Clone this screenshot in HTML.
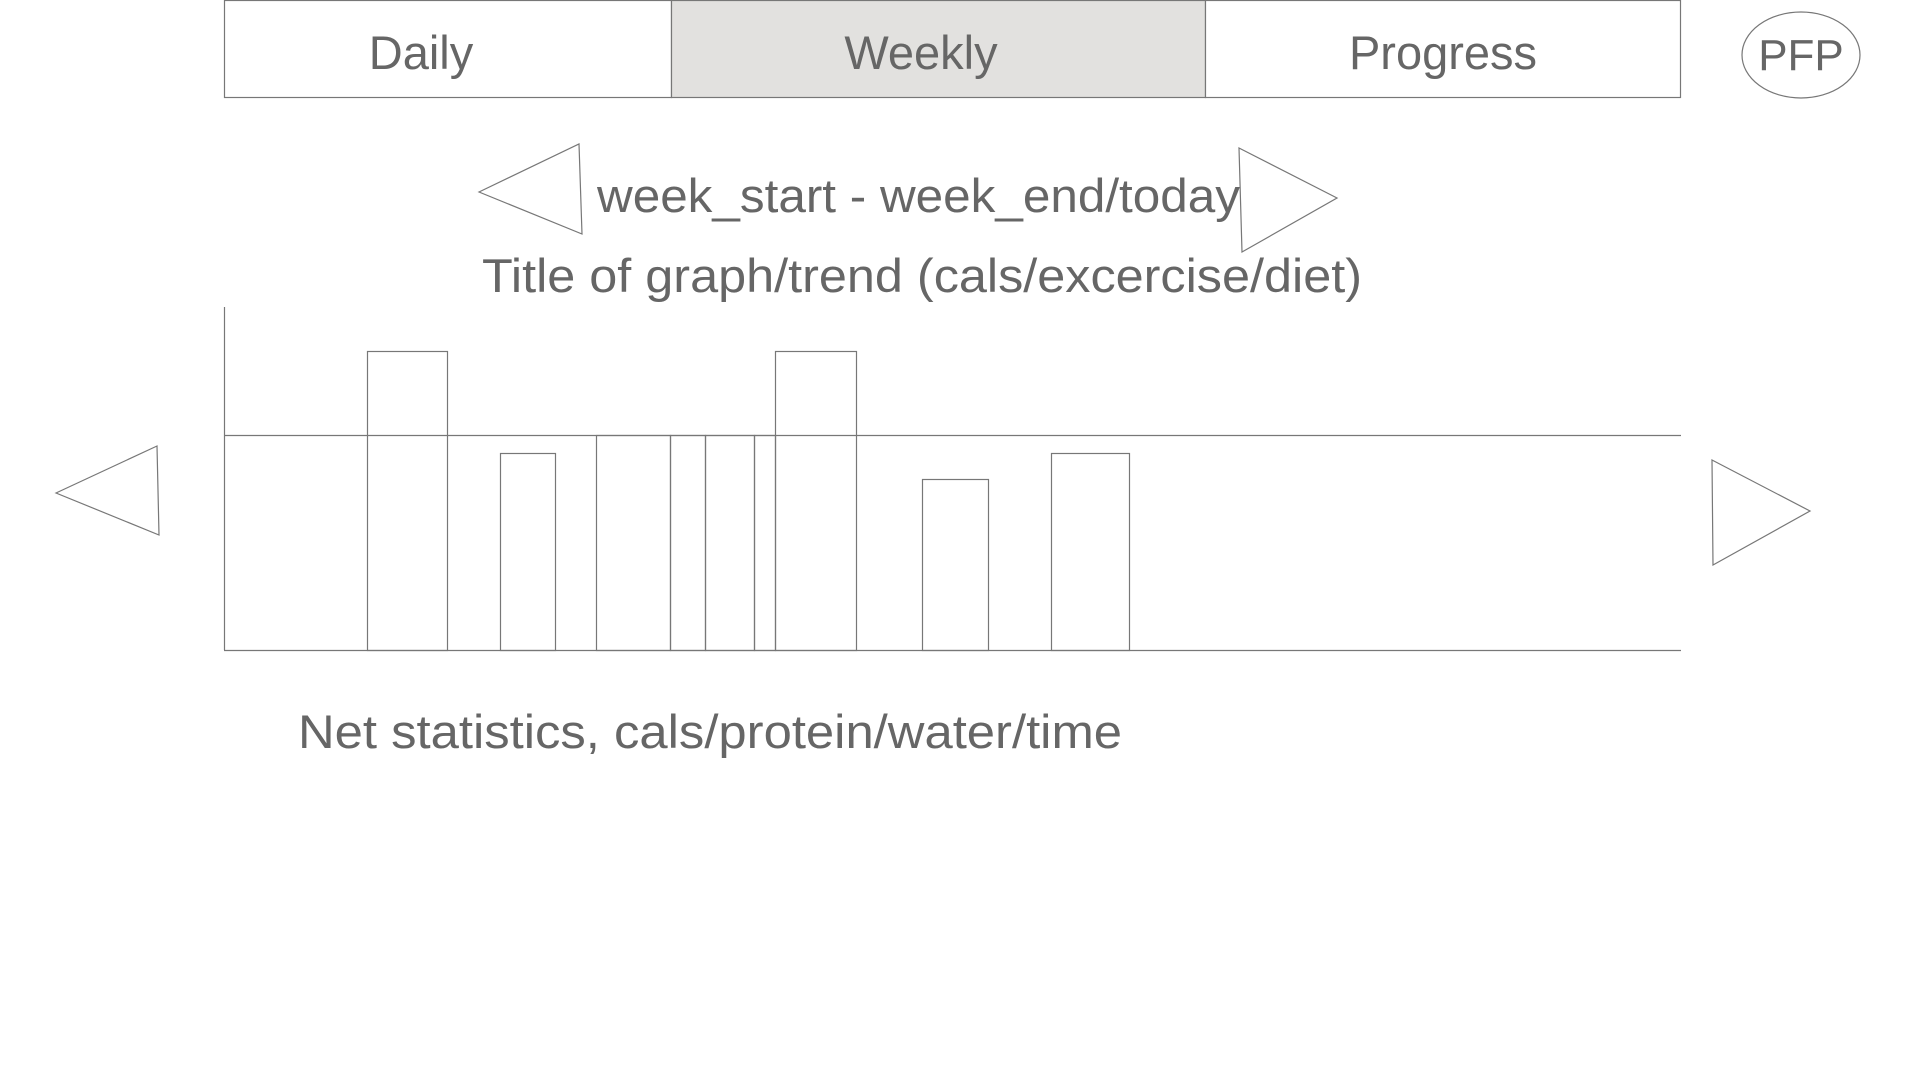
<!DOCTYPE html>
<html><head><meta charset="utf-8"><style>
html,body{margin:0;padding:0;background:#fff;width:1920px;height:1080px;overflow:hidden}
svg{display:block}
text{font-family:"Liberation Sans",sans-serif;fill:#666}
</style></head><body>
<svg width="1920" height="1080" viewBox="0 0 1920 1080">
<g fill="none" stroke="#777" stroke-width="1.2">
<rect x="224.5" y="0.5" width="447" height="97" fill="#fff"/>
<rect x="671.5" y="0.5" width="534" height="97" fill="#e2e1df"/>
<rect x="1205.5" y="0.5" width="475" height="97" fill="#fff"/>
<ellipse cx="1801" cy="55" rx="59" ry="43"/>
<polygon points="479,192 579,144 582,234"/>
<polygon points="1239,148 1337,198 1242,252"/>
<polygon points="56,493 157,446 159,535"/>
<polygon points="1712,460 1810,511 1713,565"/>
<line x1="224.5" y1="307" x2="224.5" y2="650"/>
<line x1="224" y1="650.5" x2="1681" y2="650.5"/>
<line x1="224" y1="435.5" x2="1681" y2="435.5"/>
<rect x="367.5" y="351.5" width="80" height="299"/>
<rect x="500.5" y="453.5" width="55" height="197"/>
<rect x="596.5" y="435.5" width="74" height="215"/>
<rect x="670.5" y="435.5" width="35" height="215"/>
<rect x="705.5" y="435.5" width="49" height="215"/>
<rect x="754.5" y="435.5" width="21" height="215"/>
<rect x="775.5" y="351.5" width="81" height="299"/>
<rect x="922.5" y="479.5" width="66" height="171"/>
<rect x="1051.5" y="453.5" width="78" height="197"/>
</g>
<text x="421" y="69" font-size="47" text-anchor="middle">Daily</text>
<text x="921" y="69" font-size="47" text-anchor="middle">Weekly</text>
<text x="1443" y="69" font-size="47" text-anchor="middle">Progress</text>
<text x="1801" y="70" font-size="44" text-anchor="middle">PFP</text>
<text x="597" y="212" font-size="47" textLength="643" lengthAdjust="spacingAndGlyphs">week_start - week_end/today</text>
<text x="482" y="292" font-size="47" textLength="880" lengthAdjust="spacingAndGlyphs">Title of graph/trend (cals/excercise/diet)</text>
<text x="298" y="748" font-size="47" textLength="824" lengthAdjust="spacingAndGlyphs">Net statistics, cals/protein/water/time</text>
</svg>
</body></html>
